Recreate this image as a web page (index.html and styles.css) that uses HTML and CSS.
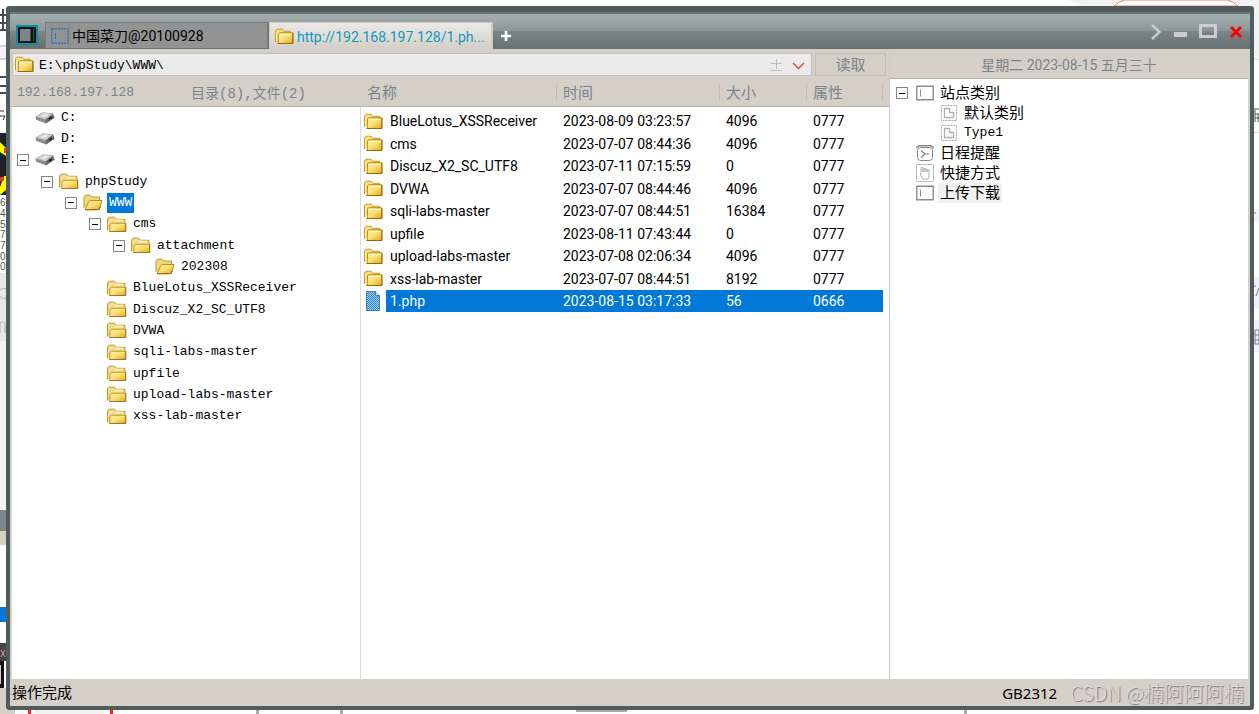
FILE: index.html
```html
<!DOCTYPE html>
<html lang="zh-CN">
<head>
<meta charset="utf-8">
<title>中国菜刀@20100928</title>
<link rel="stylesheet" href="styles.css">
</head>
<body>
<svg class="defs" aria-hidden="true">
  <defs>
    <linearGradient id="gold" x1="0" y1="0" x2="1" y2="1"><stop offset="0" stop-color="#fff3a8"/><stop offset=".5" stop-color="#fbdf70"/><stop offset="1" stop-color="#e0a61a"/></linearGradient>
    <pattern id="dither" width="2" height="2" patternUnits="userSpaceOnUse"><rect width="2" height="2" fill="#a3cdf0"/><path d="M0 0h1v1H0zM1 1h1v1H1z" fill="#2c86d3"/></pattern>
    <symbol id="folder" viewBox="0 0 20 17">
      <path d="M1.5 14V3L3 1.2h5L10 3.3h6.5v2.2" fill="#f7df83" stroke="#c69a2a"/>
      <path d="M2.5 13V4" stroke="#fff3b4"/>
      <path d="M4.5 6l1.2-1.3h13v10.8H4.2z" fill="url(#gold)" stroke="#bd8b16"/>
      <path d="M5.5 6.5h12" stroke="#fff7c9"/><path d="M3.5 15.5h15.5V5" stroke="#94690b" fill="none"/>
    </symbol>
    <symbol id="tfolder" viewBox="0 0 20 17">
      <path d="M.5 14.5V3L2 1.2h5.5L9 3.3h9v4" fill="#f2dc91" stroke="#bf9836"/>
      <path d="M8 4.5h8" stroke="#fff0ad" stroke-width="2"/>
      <path d="M2.8 15.5V9l1.5-1.8h14.2v8.3z" fill="url(#gold)" stroke="#c39327"/>
      <path d="M2.5 15.5h16.3V7" stroke="#9c7526" fill="none"/>
    </symbol>
    <symbol id="ofolder" viewBox="0 0 20 17">
      <path d="M1 14V3l1.5-1.8H7L9 3h7.5v4" fill="#f2d87b" stroke="#bf9836"/>
      <path d="M2.2 15.5L5.5 8 7 6.5h12l-2.7 9z" fill="url(#gold)" stroke="#bd8b25"/>
      <path d="M2.2 15.8h13.5l1.8-3" stroke="#94690b" fill="none"/>
    </symbol>
    <symbol id="drive" viewBox="0 0 20 12">
      <path d="M.5 4.5L8 .5l10 .8 1.5 4.5-8.5 5.7-10-3.8z" fill="#8d8d8d"/>
      <path d="M1 4.5L8 .7l10 .8-7.5 6z" fill="#cbcbcb"/><path d="M5 4l5-2.2 4 .6-4.5 2.7z" fill="#eee"/>
      <path d="M10.5 7.5L18 2l1.5 3.8-8.5 5.5z" fill="#6a6a6a"/><path d="M14 7l3-2" stroke="#242424" stroke-width="2"/>
    </symbol>
    <symbol id="panel" viewBox="0 0 18 15"><path d="M.8.8h16.4v13.4H.8z" fill="#fff" stroke="#8b8b8b" stroke-width="1.4"/><path d="M4.5 4v7" stroke="#8b8b8b"/></symbol>
    <symbol id="type" viewBox="0 0 16 16"><path d="M.5.5h15v15H.5z" fill="none" stroke="#aaa" stroke-dasharray="2 1"/><path d="M3.500 3.500h5v4h4v5h-9z" fill="none" stroke="#b0b0b0" stroke-width="1.3"/></symbol>
  </defs>
</svg>
<div class="desktop">
  <svg class="edge-top" viewBox="0 0 190 6" aria-hidden="true"><path d="M0 0h190v6H12z" fill="#f2f2f2"/><path d="M45 6Q49 2 55 0h104q6 2 10 6z" fill="#fff" stroke="#f27b64"/></svg>
  <svg class="edge-left" viewBox="0 0 6 714" preserveAspectRatio="xMinYMin slice" aria-hidden="true">
    <path d="M0 47h6v12H0z" fill="#f2f2f2"/><path d="M0 46h6M0 59h6" stroke="#aaa"/>
    <path d="M0 15h6M0 23h6M0 30h6M3 9v22M0 77h6M0 86h6M0 93h6" stroke="#454b5e" stroke-width="2"/>
    <path d="M0 111h4M0 116h5l-2 4" stroke="#333" fill="none"/>
    <path d="M0 133h6v62H0z" fill="#20202a"/><path d="M0 142l6 6v8l-6-4zM4 176h2v14l-6 5v-8z" fill="#ff0"/><path d="M4 148h2v5H4zM0 177h4v4H0z" fill="#e53a2a"/>
    <g class="edge-digits"><text x="0" y="206">6</text><text x="0" y="217">4</text><text x="0" y="228">5</text><text x="0" y="238">7</text><text x="0" y="249">7</text><text x="0" y="260">0</text><text x="0" y="270">0</text></g>
    <path d="M0 273h6v68H0z" fill="#e8e8e8"/><path d="M6 289a5 5 0 1 0 0 9M0 333v-10q5-3 5 2v8" stroke="#aaa" fill="none"/>
    <path d="M0 341h6v168H0z" fill="#f4f4f4"/><path d="M0 510h6v21H0z" fill="#7b8888"/><path d="M0 531h6v14H0z" fill="#d4d0c8"/>
    <path d="M0 607h6v15H0z" fill="#0078d7"/><path d="M0 643h6v18H0z" fill="#444"/><path d="M1 650l4 7m0-7l-4 7" stroke="#d99"/>
    <path d="M0 661h4v27H0z" fill="#111"/><path d="M0 665h1v19H0z" fill="#d4d0c8"/><path d="M0 688h6v26H0z" fill="#d4d0c8"/>
  </svg>
  <main class="window">
    <header class="titlebar">
      <button class="app-button" aria-label="主菜单"><svg width="22" height="20" viewBox="0 0 22 20"><path d="M1 1h20v18H1z" fill="#2b3234" stroke="#0b8ea6" stroke-width="2"/><path d="M3 3h16v14H3z" fill="#7d8787" stroke="#111" stroke-width="2"/><path d="M16 4v12" stroke="#111" stroke-width="3"/></svg></button>
      <nav class="tabs">
        <button class="tab"><svg width="18" height="16" viewBox="0 0 18 16"><path d="M.8.8h16.4v14.4H.8z" fill="none" stroke="#2f72b2" stroke-width="1.4" stroke-dasharray="2 1"/><path d="M4.5 5v6" stroke="#2f72b2"/></svg><span>中国菜刀@20100928</span></button>
        <button class="tab tab-active"><svg width="20" height="17"><use href="#folder"/></svg><span>http://192.168.197.128/1.ph...</span></button>
        <button class="add" aria-label="新标签"><svg width="12" height="12" viewBox="0 0 12 12"><path d="M6 1v10M1 6h10" stroke="#fff" stroke-width="2.6"/></svg></button>
      </nav>
      <div class="controls">
        <button aria-label="更多"><svg width="12" height="18" viewBox="0 0 12 18"><path d="M2 2l7.5 7L2 16" fill="none" stroke="#c9cbcb" stroke-width="2.4"/></svg></button>
        <button aria-label="最小化"><svg width="13" height="18" viewBox="0 0 13 18"><path d="M0 9h13v5H0z" fill="#cdcdcd"/></svg></button>
        <button aria-label="最大化"><svg width="18" height="18" viewBox="0 0 18 18"><path d="M1.5 2.5h15v11h-15z" fill="none" stroke="#cdcdcd" stroke-width="3"/></svg></button>
        <button aria-label="关闭"><svg width="14" height="18" viewBox="0 0 14 18"><path d="M2 4l10 10M12 4L2 14" stroke="#f00" stroke-width="3"/></svg></button>
      </div>
    </header>
    <div class="body">
      <section class="manager">
        <div class="address-row">
          <label class="address"><svg width="20" height="17"><use href="#folder"/></svg><input type="text" aria-label="路径" value="E:\phpStudy\WWW\"><svg width="36" height="14" viewBox="0 0 36 14"><path d="M6.5 1v10M1 5.500h11M0 12.500h12" stroke="#bbb"/><path d="M23 5l5.500 5.500L34 5" fill="none" stroke="#f04040" stroke-width="1.4"/></svg></label>
          <button class="read">读取</button>
        </div>
        <div class="panes">
          <div class="tree-pane">
            <div class="pane-head"><span class="host">192.168.197.128</span><span>目录(8),文件(2)</span></div>
            <ul class="tree">
              <li><i class="space"></i><svg class="drive"><use href="#drive"/></svg><span>C:</span></li>
              <li><i class="space"></i><svg class="drive"><use href="#drive"/></svg><span>D:</span></li>
              <li><button class="toggle" aria-label="折叠"></button><svg class="drive"><use href="#drive"/></svg><span>E:</span></li>
              <li class="l1"><button class="toggle" aria-label="折叠"></button><svg><use href="#tfolder"/></svg><span>phpStudy</span></li>
              <li class="l2"><button class="toggle" aria-label="折叠"></button><svg><use href="#ofolder"/></svg><span class="selected">WWW</span></li>
              <li class="l3"><button class="toggle" aria-label="折叠"></button><svg><use href="#tfolder"/></svg><span>cms</span></li>
              <li class="l4"><button class="toggle" aria-label="折叠"></button><svg><use href="#tfolder"/></svg><span>attachment</span></li>
              <li class="l5"><i class="space"></i><svg><use href="#ofolder"/></svg><span>202308</span></li>
              <li class="l3"><i class="space"></i><svg><use href="#tfolder"/></svg><span>BlueLotus_XSSReceiver</span></li>
              <li class="l3"><i class="space"></i><svg><use href="#tfolder"/></svg><span>Discuz_X2_SC_UTF8</span></li>
              <li class="l3"><i class="space"></i><svg><use href="#tfolder"/></svg><span>DVWA</span></li>
              <li class="l3"><i class="space"></i><svg><use href="#tfolder"/></svg><span>sqli-labs-master</span></li>
              <li class="l3"><i class="space"></i><svg><use href="#tfolder"/></svg><span>upfile</span></li>
              <li class="l3"><i class="space"></i><svg><use href="#tfolder"/></svg><span>upload-labs-master</span></li>
              <li class="l3"><i class="space"></i><svg><use href="#tfolder"/></svg><span>xss-lab-master</span></li>
            </ul>
          </div>
          <div class="list-pane">
            <table class="files">
              <colgroup><col class="c-icon"><col><col class="c-time"><col class="c-size"><col class="c-attr"><col class="c-end"></colgroup>
              <thead><tr><th colspan="2">名称</th><th>时间</th><th>大小</th><th>属性</th><th class="end"></th></tr></thead>
              <tbody>
                <tr><td><svg><use href="#folder"/></svg></td><td>BlueLotus_XSSReceiver</td><td>2023-08-09 03:23:57</td><td>4096</td><td>0777</td></tr>
                <tr><td><svg><use href="#folder"/></svg></td><td>cms</td><td>2023-07-07 08:44:36</td><td>4096</td><td>0777</td></tr>
                <tr><td><svg><use href="#folder"/></svg></td><td>Discuz_X2_SC_UTF8</td><td>2023-07-11 07:15:59</td><td>0</td><td>0777</td></tr>
                <tr><td><svg><use href="#folder"/></svg></td><td>DVWA</td><td>2023-07-07 08:44:46</td><td>4096</td><td>0777</td></tr>
                <tr><td><svg><use href="#folder"/></svg></td><td>sqli-labs-master</td><td>2023-07-07 08:44:51</td><td>16384</td><td>0777</td></tr>
                <tr><td><svg><use href="#folder"/></svg></td><td>upfile</td><td>2023-08-11 07:43:44</td><td>0</td><td>0777</td></tr>
                <tr><td><svg><use href="#folder"/></svg></td><td>upload-labs-master</td><td>2023-07-08 02:06:34</td><td>4096</td><td>0777</td></tr>
                <tr><td><svg><use href="#folder"/></svg></td><td>xss-lab-master</td><td>2023-07-07 08:44:51</td><td>8192</td><td>0777</td></tr>
                <tr class="current"><td><svg class="doc" viewBox="0 0 20 20"><path d="M3.500.5h9l4 4v15h-13z" fill="url(#dither)" stroke="#3c80bd"/><path d="M12.500.5v4h4" fill="#d5eafa" stroke="#3c80bd"/></svg></td><td>1.php</td><td>2023-08-15 03:17:33</td><td>56</td><td>0666</td></tr>
              </tbody>
            </table>
          </div>
        </div>
      </section>
      <aside class="side">
        <div class="date">星期二 2023-08-15 五月三十</div>
        <ul class="categories">
          <li><button class="toggle" aria-label="折叠"></button><svg class="pic"><use href="#panel"/></svg><span>站点类别</span></li>
          <li class="sub"><svg class="pic"><use href="#type"/></svg><span>默认类别</span></li>
          <li class="sub"><svg class="pic"><use href="#type"/></svg><span class="mono">Type1</span></li>
          <li><i class="space"></i><svg class="pic" viewBox="0 0 18 16"><rect x="1.500" y="2.500" width="15" height="13" rx="3" fill="#fff" stroke="#888"/><path d="M0 3l3-2.300h12L18 3" fill="none" stroke="#888" stroke-width="1.400"/><path d="M5 5.500L9 9l-4 3.500M9 9h4" fill="none" stroke="#888" stroke-width="1.200"/></svg><span>日程提醒</span></li>
          <li><i class="space"></i><svg class="pic hand" viewBox="0 0 18 18"><rect x=".5" y=".5" width="17" height="17" rx="1" fill="#fff" stroke="#bbb"/><path d="M5 10V4q1-2 2 0v4-3q1-1 2 0v3-3q1-1 2 0v3-2q1-1 2 0v6l-1 3H7l-3-5z" fill="#fff" stroke="#b0b0b0"/></svg><span>快捷方式</span></li>
          <li><i class="space"></i><svg class="pic"><use href="#panel"/></svg><span class="shade">上传下载</span></li>
        </ul>
      </aside>
    </div>
    <footer class="status"><span>操作完成</span><span class="encoding">GB2312</span><span class="watermark">CSDN @楠阿阿阿楠</span></footer>
  </main>
  <svg class="edge-right" viewBox="0 0 5 714" preserveAspectRatio="xMinYMin slice" aria-hidden="true">
    <path d="M0 0h5v59H0z" fill="#f2f2f2"/><path d="M0 59.500h5M0 132.500h5" stroke="#ddd"/><path d="M0 109h5M1 114h4M1 118h4M1 110v12M4 114v8" stroke="#555"/>
    <path d="M0 209h5v13H0zM0 277h5v32H0zM0 320h5v32H0z" fill="#f0f1fa"/><path d="M0 213h2M0 286h2M5 288l-3 8M1 330h4v14H1zM1 335h4M1 340h4" fill="none" stroke="#7777a5"/>
  </svg>
  <svg class="edge-bottom" viewBox="0 0 1259 4" preserveAspectRatio="xMinYMin slice" aria-hidden="true"><path d="M0 0h15v4H0z" fill="#d4d0c8"/><path d="M34 0h70v4H34z" fill="#f2f2f2"/><path d="M28 0h3v4h-3zM110 0h3v4h-3z" fill="#f22"/><path d="M256 0h3v4h-3zM340 0h3v4h-3zM576 0h51v2h-51zM964 0h3v4h-3z" fill="#aaa"/></svg>
</div>
</body>
</html>
```
FILE: styles.css
```css
* { box-sizing: border-box; }
body { margin: 0; background: #fff; color: #000; font: 15px/20px Roboto, "Noto Sans CJK SC", sans-serif; }
button { border: 0; padding: 0; margin: 0; background: none; font: inherit; color: inherit; }
ul { list-style: none; margin: 0; padding: 0; }
svg { display: block; flex: none; }
.defs { position: absolute; width: 0; height: 0; }

.desktop { display: grid; grid-template: 6px minmax(0, 1fr) 4px / 6px minmax(0, 1fr) 5px; height: 100vh; overflow: hidden; }
.edge-top { grid-area: 1 / 2 / 2 / 4; justify-self: end; width: 190px; height: 6px; }
.edge-left { grid-area: 1 / 1 / 4 / 2; width: 6px; height: 100%; }
.edge-right { grid-area: 1 / 3 / 4 / 4; width: 5px; height: 100%; }
.edge-bottom { grid-area: 3 / 1 / 4 / 4; width: 100%; height: 4px; }
.edge-digits { font: 10px "Liberation Sans", sans-serif; fill: #555; }

.window { grid-area: 2 / 2 / 3 / 3; display: flex; flex-direction: column; background: #d4d0c8; border: 4px solid #4f5b5d; border-top-width: 6px; border-radius: 3px; }
.titlebar { display: flex; align-items: flex-end; height: 37px; padding: 0 6px; border-top: 2px solid #6c7778; border-bottom: 1px solid #687273; background: linear-gradient(#a4afb0, #8b9797 50%, #7b8686 51%, #667071); }
.app-button { margin-bottom: 3px; }
.tabs { display: flex; flex: 1; align-items: flex-end; margin-left: 7px; min-width: 0; }
.tab { display: flex; align-items: center; gap: 3px; width: 224px; height: 26px; padding: 1px 5px 0; border: 1px solid #6f7b7d; border-right-width: 2px; border-bottom: 0; background: #939393; white-space: nowrap; overflow: hidden; font-size: 14px; }
.tab-active { margin-bottom: -1px; height: 27px; padding: 1px 4px 0; border-color: #d4c9bf; background: linear-gradient(#ebe9e7, #d4d0c8); color: #0f9abb; }
.add { margin: 0 0 6px 7px; }
.controls { display: flex; align-items: center; gap: 12px; padding: 0 1px 7px 0; }

.body { display: flex; flex: 1; min-height: 0; padding: 0 2px; }
.manager { display: flex; flex-direction: column; flex: 1; min-width: 0; }
.address-row { display: flex; gap: 3px; padding: 4px 3px 0 0; }
.address { display: flex; flex: 1; align-items: center; height: 23px; padding: 0 5px 0 1px; border: 1px solid #c4bfb6; background: #ebebeb; }
.address input { flex: 1; min-width: 0; margin-left: 5px; padding: 1px 0 0; border: 0; outline: 0; background: none; color: #000; font: 13px "Liberation Mono", monospace; }
.read { width: 71px; height: 23px; border: 1px solid #c2bdb3; color: #7a838d; }
.panes { display: flex; flex: 1; min-height: 0; }
.tree-pane { display: flex; flex-direction: column; flex: none; width: 349px; background: #fff; border-right: 1px solid #dcdcdc; }
.pane-head { display: flex; gap: 57px; align-items: center; height: 31px; margin-right: -1px; padding: 2px 5px 0; background: #d4d0c8; border-bottom: 1px solid #b9b3a9; color: #7a838d; font: 14px "Liberation Mono", "Noto Sans CJK SC", monospace; }
.host { font-size: 13px; }
.tree { display: grid; grid-auto-rows: 1fr; height: 320px; font: 13px/20px "Liberation Mono", monospace; }
.tree li { display: flex; align-items: center; padding-left: 5px; }
.tree svg { width: 20px; height: 17px; margin: 0 4px 0 6px; }
.tree .drive { height: 12px; }
.tree span { padding: 0 2px; }
.tree .l1 { padding-left: 29px; }
.tree .l2 { padding-left: 53px; }
.tree .l3 { padding-left: 77px; }
.tree .l4 { padding-left: 101px; }
.tree .l5 { padding-left: 125px; }
.tree .selected { background: #0078d7; color: #fff; }
.space { width: 12px; flex: none; }
.toggle { display: grid; place-items: center; flex: none; width: 12px; height: 12px; border: 1px solid #858585; background: #fff; }
.toggle::before { content: ""; width: 6px; height: 1px; background: #000; }

.list-pane { flex: 1; min-width: 0; background: #fff; }
.files { width: 100%; table-layout: fixed; border-collapse: separate; border-spacing: 0; font-size: 14px; line-height: 20px; }
.c-icon { width: 25px; }
.c-time { width: 163px; }
.c-size { width: 87px; }
.c-attr { width: 76px; }
.c-end { width: 6px; }
.files th { height: 31px; padding: 4px 6px 0; background: linear-gradient(#c2bdb4, #c2bdb4) right 8px / 1px 17px no-repeat, #d4d0c8; border-bottom: 1px solid #b9b3a9; color: #7a838d; font-size: 15px; font-weight: 400; text-align: left; }
.files .end { background: #d4d0c8; padding: 0; }
.files tbody::before { content: ""; display: table-row; height: 3px; }
.files td { height: 22px; padding: 1px 6px; white-space: nowrap; }
.files tr:nth-child(even) td { height: 23px; }
.files td:first-child { padding: 0 0 0 2px; }
.files td:nth-child(2) { padding-left: 4px; }
.files svg { width: 20px; height: 17px; }
.files .doc { height: 20px; }
.current td:not(:first-child) { background: #0078d7; color: #fff; }

.side { display: flex; flex-direction: column; flex: none; width: 359px; background: #fff; border-left: 1px solid #d0ccc5; }
.date { height: 30px; padding: 6px 0 0; background: #d4d0c8; border-bottom: 1px solid #b9b3a9; color: #7a838d; font-size: 14px; text-align: center; }
.categories { padding: 4px 0 0 6px; line-height: 20px; }
.categories li { display: flex; align-items: center; height: 20px; }
.categories .sub { padding-left: 44px; }
.pic { width: 18px; height: 16px; margin: 0 4px 0 8px; }
.hand { height: 18px; }
.sub .pic { margin: 0 4px 0 0; }
.categories span { padding: 0 2px; }
.categories .mono { font: 13px/20px "Liberation Mono", monospace; }
.categories .shade { background: #f0f0f0; }
.status { display: flex; align-items: center; height: 27px; padding: 0 6px 0 2px; white-space: nowrap; }
.encoding { margin-left: auto; font-family: "Noto Sans", sans-serif; }
.watermark { margin-left: 13px; color: #dedcda; font: 300 20px/26px "Noto Sans CJK SC", sans-serif; text-shadow: 1px 1px 1px #777; }
```
